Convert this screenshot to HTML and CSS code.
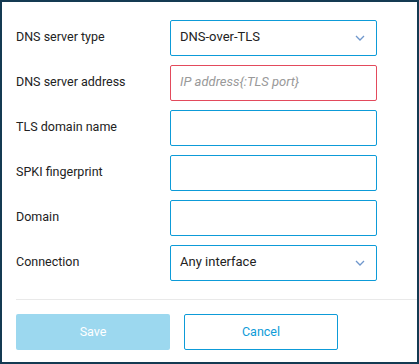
FILE: index.html
```html
<!DOCTYPE html>
<html>
<head>
  <title>DNS server</title>
  <link rel="stylesheet" href="styles.css">
</head>
<body>
  <div class="dialog">
    <div class="form">
      <label class="label">DNS server type</label>
      <div class="field select">
        <span>DNS-over-TLS</span>
        <svg class="chevron" width="10" height="6" viewBox="0 0 10 6"><path d="M1 1l4 4 4-4" fill="none" stroke="#6f97cc" stroke-width="1.3"/></svg>
      </div>

      <label class="label">DNS server address</label>
      <div class="field error"><span class="placeholder">IP address{:TLS port}</span></div>

      <label class="label">TLS domain name</label>
      <div class="field"></div>

      <label class="label">SPKI fingerprint</label>
      <div class="field"></div>

      <label class="label">Domain</label>
      <div class="field"></div>

      <label class="label">Connection</label>
      <div class="field select">
        <span>Any interface</span>
        <svg class="chevron" width="10" height="6" viewBox="0 0 10 6"><path d="M1 1l4 4 4-4" fill="none" stroke="#6f97cc" stroke-width="1.3"/></svg>
      </div>
    </div>

    <div class="divider"></div>

    <div class="buttons">
      <button class="btn btn-save">Save</button>
      <button class="btn btn-cancel">Cancel</button>
    </div>
  </div>
</body>
</html>
```
FILE: styles.css
```css
body {
  margin: 0;
  padding: 0;
  font-family: Roboto, "Liberation Sans", sans-serif;
  font-size: 12.5px;
  color: #222;
  background-color: #fff;
}

.dialog {
  width: 419px;
  height: 364px;
  box-sizing: border-box;
  border: 2px solid #143a52;
  background-color: #fff;
}

.form {
  display: grid;
  grid-template-columns: 154px 207px;
  row-gap: 9px;
  padding: 18px 0 0 14px;
}

.label {
  display: flex;
  align-items: center;
  height: 36px;
  padding-bottom: 3px;
  box-sizing: border-box;
}

.field {
  display: flex;
  align-items: center;
  justify-content: space-between;
  height: 36px;
  box-sizing: border-box;
  border: 1px solid #0d9bd8;
  border-radius: 2px;
  padding: 0 11px 0 9px;
  font-size: 13px;
}

.field span {
  margin-bottom: 3px;
}

.field.error {
  border-color: #e34a5c;
}

.placeholder {
  color: #999;
  font-style: italic;
}

.chevron {
  display: block;
  margin-bottom: 1px;
}

.divider {
  height: 1px;
  background-color: #e9e9e9;
  margin: 18px 0 0 14px;
}

.buttons {
  display: flex;
  gap: 14px;
  padding: 14px 0 0 14px;
}

.btn {
  width: 154px;
  height: 36px;
  box-sizing: border-box;
  border-radius: 2px;
  padding: 0 0 2px;
  font-family: Roboto, "Liberation Sans", sans-serif;
  font-size: 12.5px;
}

.btn-save {
  background-color: #9cd8ef;
  border: none;
  color: #fff;
}

.btn-cancel {
  background-color: #fff;
  border: 1px solid #0d9bd8;
  color: #0d9bd8;
}
```
